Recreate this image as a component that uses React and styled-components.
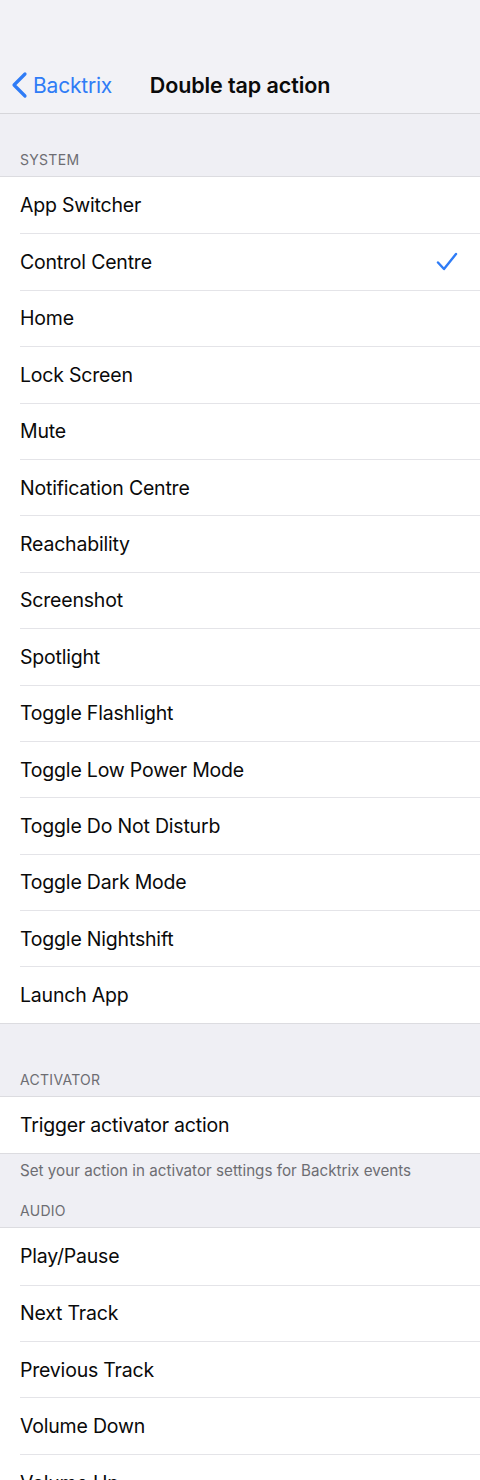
import styled, { createGlobalStyle } from 'styled-components';

const GlobalStyle = createGlobalStyle`
  body {
    margin: 0;
    background: #efeff4;
    font-family: Inter, "Liberation Sans", Arial, sans-serif;
    -webkit-font-smoothing: antialiased;
  }
`;

const Page = styled.div`
  width: 480px;
  min-height: 1480px;
  background: #efeff4;
  overflow: hidden;
`;

const NavBar = styled.div`
  height: 114px;
  box-sizing: border-box;
  padding-top: 58px;
  border-bottom: 1px solid #d6d6da;
  background: #f2f2f6;
  display: grid;
  grid-template-columns: 1fr auto 1fr;
  align-items: start;
`;

const BackButton = styled.div`
  display: flex;
  align-items: center;
  gap: 5px;
  padding-left: 11px;
  height: 54px;
  color: #2f7cf6;
  font-size: 21px;
  letter-spacing: -0.2px;
`;

const NavTitle = styled.div`
  height: 54px;
  display: flex;
  align-items: center;
  font-size: 21.5px;
  font-weight: 600;
  color: #0a0a0a;
  letter-spacing: -0.1px;
`;

const SectionHeader = styled.div`
  height: ${({ $h }) => $h}px;
  box-sizing: border-box;
  display: flex;
  align-items: flex-end;
  padding: 0 20px 8px;
  font-size: 14px;
  color: #6d6d72;
  letter-spacing: 0.3px;
  text-transform: uppercase;
`;

const Footer = styled.div`
  padding: 7px 20px 0;
  font-size: 15.2px;
  color: #6d6d72;
  white-space: nowrap;
`;

const List = styled.div`
  background: #fff;
  border-top: 1px solid #dcdce0;
  border-bottom: 1px solid #dcdce0;
`;

const Row = styled.div`
  height: 56.4px;
  display: flex;
  align-items: center;
  justify-content: space-between;
  padding-right: 22px;
  margin-left: 20px;
  font-size: 19.5px;
  color: #0a0a0a;
  letter-spacing: -0.2px;
  box-sizing: border-box;
  & + & {
    border-top: 1px solid #e4e4e8;
  }
`;

const Check = () => (
  <svg width="22" height="20" viewBox="0 0 22 20" fill="none">
    <path d="M2 10.5 L8 17 L20 2" stroke="#2f7cf6" strokeWidth="2.4" strokeLinecap="round" strokeLinejoin="round" />
  </svg>
);

const Chevron = () => (
  <svg width="17" height="28" viewBox="0 0 17 28" fill="none">
    <path d="M14 3 L3 14 L14 25" stroke="#2f7cf6" strokeWidth="3.2" strokeLinecap="round" strokeLinejoin="round" />
  </svg>
);

const system = [
  'App Switcher', 'Control Centre', 'Home', 'Lock Screen', 'Mute',
  'Notification Centre', 'Reachability', 'Screenshot', 'Spotlight',
  'Toggle Flashlight', 'Toggle Low Power Mode', 'Toggle Do Not Disturb',
  'Toggle Dark Mode', 'Toggle Nightshift', 'Launch App',
];

const audio = ['Play/Pause', 'Next Track', 'Previous Track', 'Volume Down', 'Volume Up'];

export default function App() {
  return (
    <Page>
      <GlobalStyle />
      <NavBar>
        <BackButton>
          <Chevron />
          Backtrix
        </BackButton>
        <NavTitle>Double tap action</NavTitle>
        <div />
      </NavBar>

      <SectionHeader $h={62}>System</SectionHeader>
      <List>
        {system.map((item) => (
          <Row key={item}>
            {item}
            {item === 'Control Centre' && <Check />}
          </Row>
        ))}
      </List>

      <SectionHeader $h={72}>Activator</SectionHeader>
      <List>
        <Row>Trigger activator action</Row>
      </List>
      <Footer>Set your action in activator settings for Backtrix events</Footer>

      <SectionHeader $h={47}>Audio</SectionHeader>
      <List>
        {audio.map((item) => (
          <Row key={item}>{item}</Row>
        ))}
      </List>
    </Page>
  );
}
